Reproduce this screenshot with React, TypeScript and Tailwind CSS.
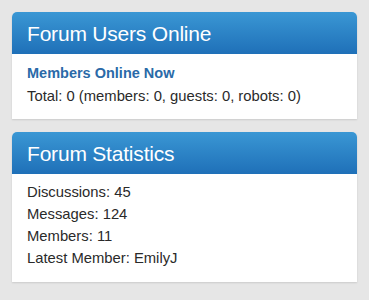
const Panel = ({ title, children }: { title: string; children: React.ReactNode }) => {
  return (
    <div className="bg-white shadow-[0_1px_2px_rgba(0,0,0,0.12)] rounded-t-[5px]">
      <div className="h-[42px] rounded-t-[5px] bg-gradient-to-b from-[#3a97d4] to-[#1f70b8] px-[15px] flex items-center">
        <h2 className="text-white text-[21px] leading-none tracking-[-0.2px] font-normal">{title}</h2>
      </div>
      {children}
    </div>
  );
};

export default function App() {
  return (
    <div
      className="w-[369px] h-[300px] bg-[#e6e6e6] px-3 pt-3 flex flex-col gap-[13px]"
      style={{ fontFamily: '"Liberation Sans", Arial, sans-serif' }}
    >
      <Panel title="Forum Users Online">
        <div className="px-[15px] pt-[8px] pb-[11px] text-[14.8px] text-[#2a2a2a]">
          <div className="font-bold text-[#2a6aa8] text-[14.5px] leading-[22px]">Members Online Now</div>
          <div className="leading-[24px]">Total: 0 (members: 0, guests: 0, robots: 0)</div>
        </div>
      </Panel>
      <Panel title="Forum Statistics">
        <div className="px-[15px] pt-[7px] pb-[13px] text-[14.8px] text-[#2a2a2a] leading-[22px]">
          <div>Discussions: 45</div>
          <div>Messages: 124</div>
          <div>Members: 11</div>
          <div>Latest Member: EmilyJ</div>
        </div>
      </Panel>
    </div>
  );
}
